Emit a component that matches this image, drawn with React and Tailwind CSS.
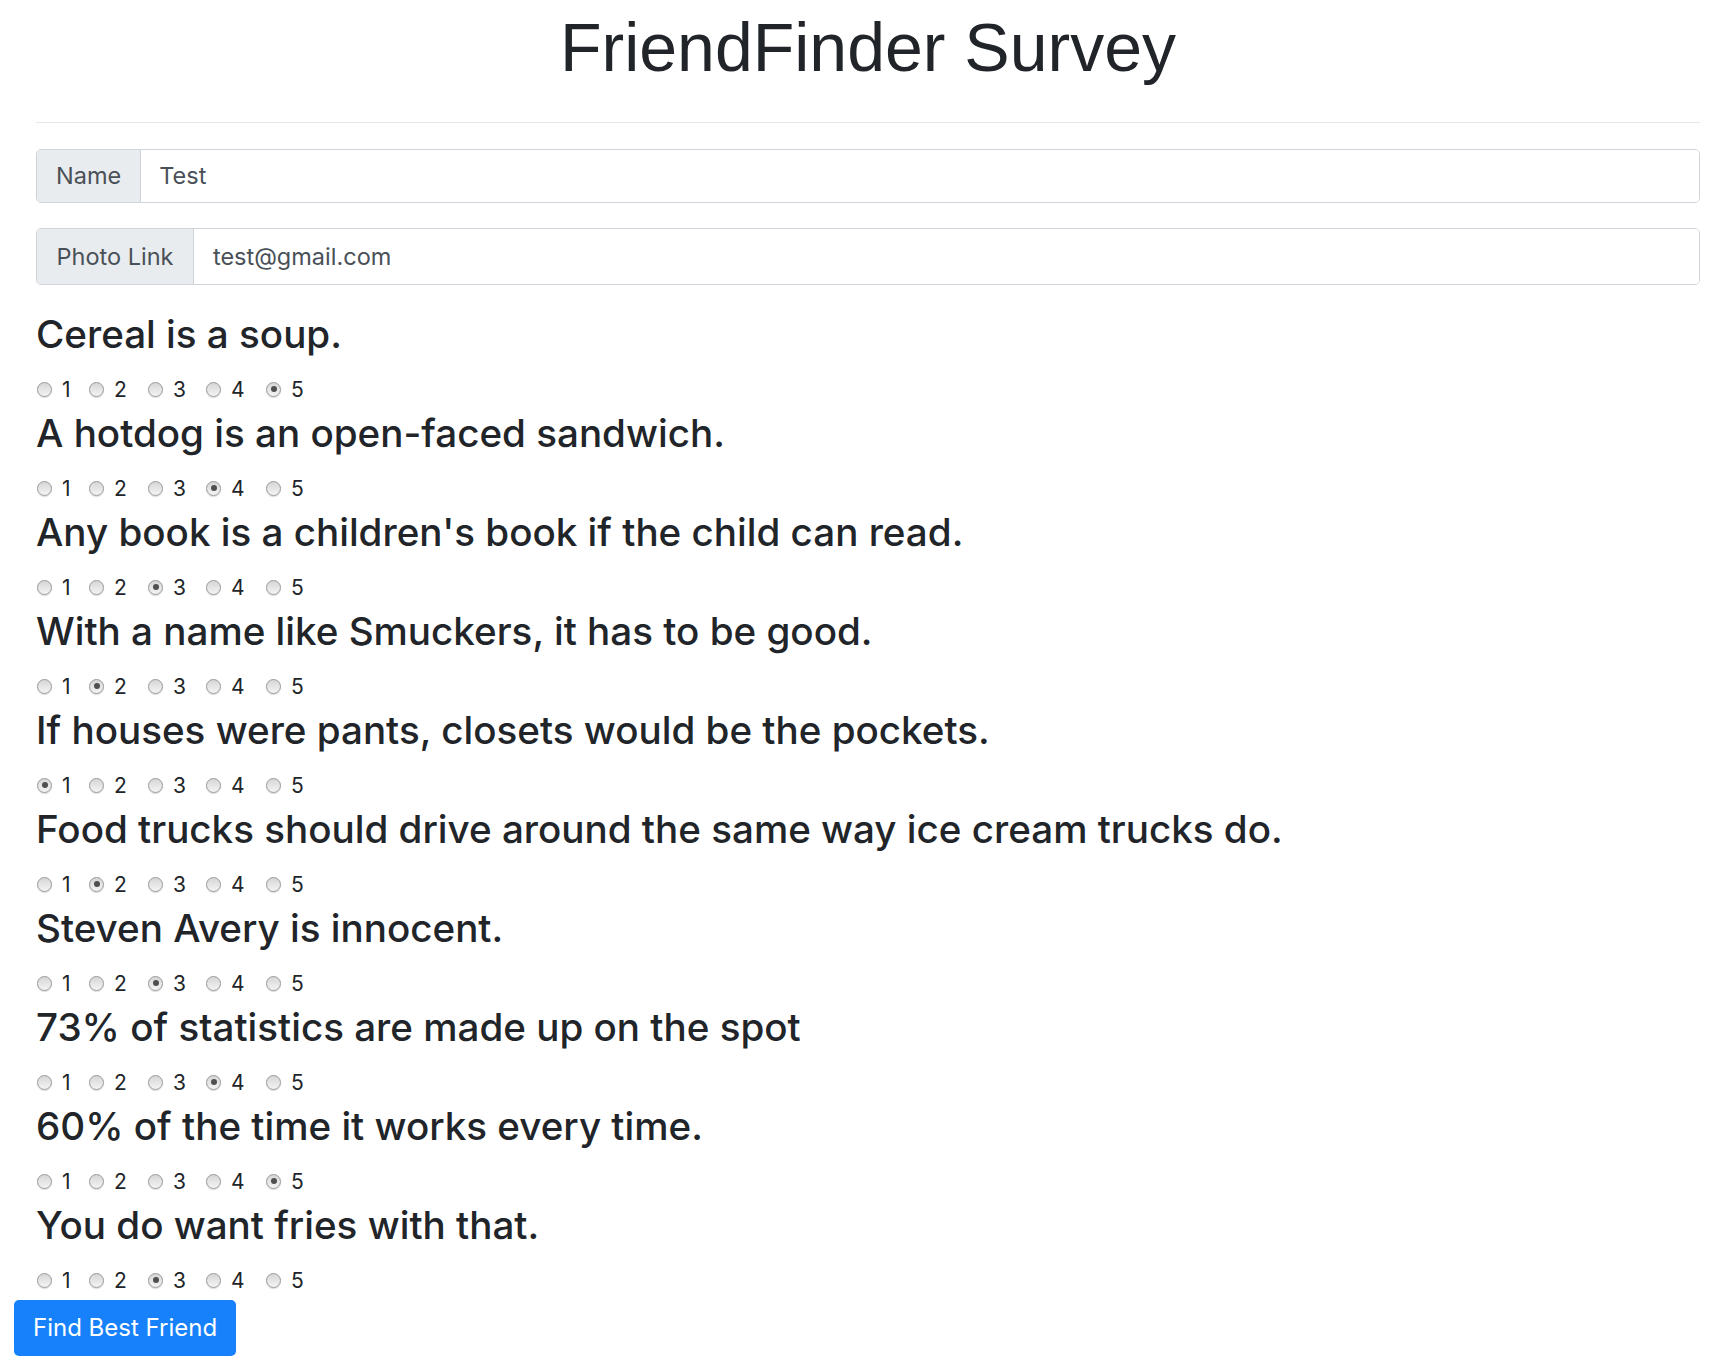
const questions = [
  ["Cereal is a soup.", 5],
  ["A hotdog is an open-faced sandwich.", 4],
  ["Any book is a children's book if the child can read.", 3],
  ["With a name like Smuckers, it has to be good.", 2],
  ["If houses were pants, closets would be the pockets.", 1],
  ["Food trucks should drive around the same way ice cream trucks do.", 2],
  ["Steven Avery is innocent.", 3],
  ["73% of statistics are made up on the spot", 4],
  ["60% of the time it works every time.", 5],
  ["You do want fries with that.", 3],
];

const cellWidths = ["w-[52px]", "w-[59px]", "w-[58px]", "w-[60px]", "w-[40px]"];

function Radio({ checked }) {
  return (
    <span className="relative flex h-[15px] w-[15px] shrink-0 items-center justify-center rounded-full border border-[#999999] bg-linear-to-b from-[#d6d6d6] to-[#f4f4f4] shadow-[0_1px_1px_rgba(0,0,0,0.15)]">
      {checked && <span className="h-[6px] w-[6px] rounded-full bg-[#4f4f4f]" />}
    </span>
  );
}

function Question({ text, value }) {
  return (
    <div>
      <div className="h-[60px] whitespace-nowrap text-[38.6px] font-medium leading-[60px] text-[#212529]">
        {text}
      </div>
      <div className="ml-[1px] flex h-[39px] items-center pt-[11px]">
        {[1, 2, 3, 4, 5].map((n, i) => (
          <label key={n} className={`flex shrink-0 items-center ${cellWidths[i]}`}>
            <Radio checked={n === value} />
            <span className="ml-[10px] text-[21px] leading-none text-[#212529]">{n}</span>
          </label>
        ))}
      </div>
    </div>
  );
}

export default function App() {
  return (
    <div className="min-h-[1368px] w-[1712px] bg-white [font-family:Inter,'Noto_Sans',sans-serif]">
      <div className="ml-[36px] mr-[12px]">
        <h1 className="pt-[6px] text-center text-[68px] font-normal leading-[82px] text-[#212529] [font-family:'Liberation_Sans',Arial,sans-serif]">
          FriendFinder Survey
        </h1>
        <div className="mt-[34px] h-px bg-[#e6e6e6]" />

        <div className="mt-[26px] flex h-[54px] overflow-hidden rounded-[5px] border border-[#ced4da]">
          <div className="flex items-center border-r border-[#ced4da] bg-[#e9ecef] px-[19px] text-[23.5px] text-[#495057]">
            Name
          </div>
          <div className="flex flex-1 items-center bg-white px-[18px] text-[23.5px] text-[#495057]">
            Test
          </div>
        </div>

        <div className="mt-[25px] flex h-[57px] overflow-hidden rounded-[5px] border border-[#ced4da]">
          <div className="flex items-center border-r border-[#ced4da] bg-[#e9ecef] px-[19.5px] text-[23.5px] text-[#495057]">
            Photo Link
          </div>
          <div className="flex flex-1 items-center bg-white px-[19px] text-[23.5px] text-[#495057]">
            test@gmail.com
          </div>
        </div>

        <div className="mt-[19px]">
          {questions.map(([t, v]) => (
            <Question key={t} text={t} value={v} />
          ))}
        </div>
      </div>

      <button className="ml-[14px] mt-[6px] flex h-[56px] items-center rounded-[5px] bg-[#1681fb] px-[19px] text-[24px] text-white">
        Find Best Friend
      </button>
    </div>
  );
}
